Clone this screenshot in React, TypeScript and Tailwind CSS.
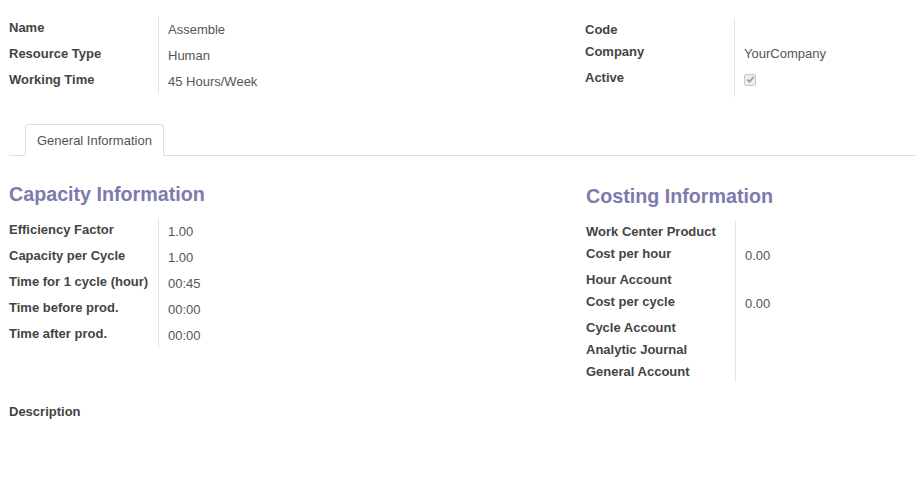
import React from 'react';

type Field = { label: string; value?: React.ReactNode; h: string };

const topLeft: Field[] = [
  { label: 'Name', value: 'Assemble', h: 'h-[26px]' },
  { label: 'Resource Type', value: 'Human', h: 'h-[26px]' },
  { label: 'Working Time', value: '45 Hours/Week', h: 'h-[26px]' },
];

const capacity: Field[] = [
  { label: 'Efficiency Factor', value: '1.00', h: 'h-[26px]' },
  { label: 'Capacity per Cycle', value: '1.00', h: 'h-[26px]' },
  { label: 'Time for 1 cycle (hour)', value: '00:45', h: 'h-[26px]' },
  { label: 'Time before prod.', value: '00:00', h: 'h-[26px]' },
  { label: 'Time after prod.', value: '00:00', h: 'h-[26px]' },
];

const costing: Field[] = [
  { label: 'Work Center Product', h: 'h-[22px]' },
  { label: 'Cost per hour', value: '0.00', h: 'h-[26px]' },
  { label: 'Hour Account', h: 'h-[22px]' },
  { label: 'Cost per cycle', value: '0.00', h: 'h-[26px]' },
  { label: 'Cycle Account', h: 'h-[22px]' },
  { label: 'Analytic Journal', h: 'h-[22px]' },
  { label: 'General Account', h: 'h-[22px]' },
];

function CheckedBox() {
  return (
    <span className="mt-[1px] inline-flex h-[12px] w-[12px] items-center justify-center rounded-[2px] border border-[#c8c8c8] bg-[#eeeeee]">
      <svg width="9" height="9" viewBox="0 0 10 10">
        <path d="M1.5 5.2 L4 7.6 L8.6 2" fill="none" stroke="#9a9a9a" strokeWidth="1.8" />
      </svg>
    </span>
  );
}

function FieldTable({ fields }: { fields: Field[] }) {
  return (
    <div className="flex flex-col">
      {fields.map((f) => (
        <div key={f.label} className={`flex ${f.h}`}>
          <div className="w-[150px] shrink-0 border-r border-[#e6e6e6] pt-[3px] font-bold leading-[18px] text-[#444444]">
            {f.label}
          </div>
          <div className="pl-[9px] pt-[5px] leading-[18px] text-[#555555]">{f.value}</div>
        </div>
      ))}
    </div>
  );
}

export default function App() {
  return (
    <div className="min-h-[478px] bg-white pl-[9px] text-[13px] font-['Liberation_Sans',Arial,sans-serif]">
      <div className="flex items-start">
        <div className="w-[576px] shrink-0 pt-[16px]">
          <FieldTable fields={topLeft} />
        </div>
        <div className="flex-1 pt-[18px]">
          <FieldTable
            fields={[
              { label: 'Code', h: 'h-[22px]' },
              { label: 'Company', value: 'YourCompany', h: 'h-[26px]' },
              { label: 'Active', value: <CheckedBox />, h: 'h-[31px]' },
            ]}
          />
        </div>
      </div>

      <div className="mt-[27px] flex border-b border-[#dddddd] pl-[16px]">
        <div className="-mb-px flex h-[32px] items-center rounded-t-[4px] border border-[#dddddd] border-b-white bg-white px-[11px] pt-[1px] text-[#555555]">
          General Information
        </div>
      </div>

      <div className="flex items-start">
        <div className="w-[577px] shrink-0 pt-[26px]">
          <h2 className="text-[19.7px] font-bold leading-[24px] text-[#7c7bad]">Capacity Information</h2>
          <div className="mt-[12px]">
            <FieldTable fields={capacity} />
          </div>
        </div>
        <div className="flex-1 pt-[28px]">
          <h2 className="text-[19.7px] font-bold leading-[24px] text-[#7c7bad]">Costing Information</h2>
          <div className="mt-[12px]">
            <FieldTable fields={costing} />
          </div>
        </div>
      </div>

      <div className="mt-[18px] pt-[3px] font-bold leading-[18px] text-[#444444]">Description</div>
    </div>
  );
}
